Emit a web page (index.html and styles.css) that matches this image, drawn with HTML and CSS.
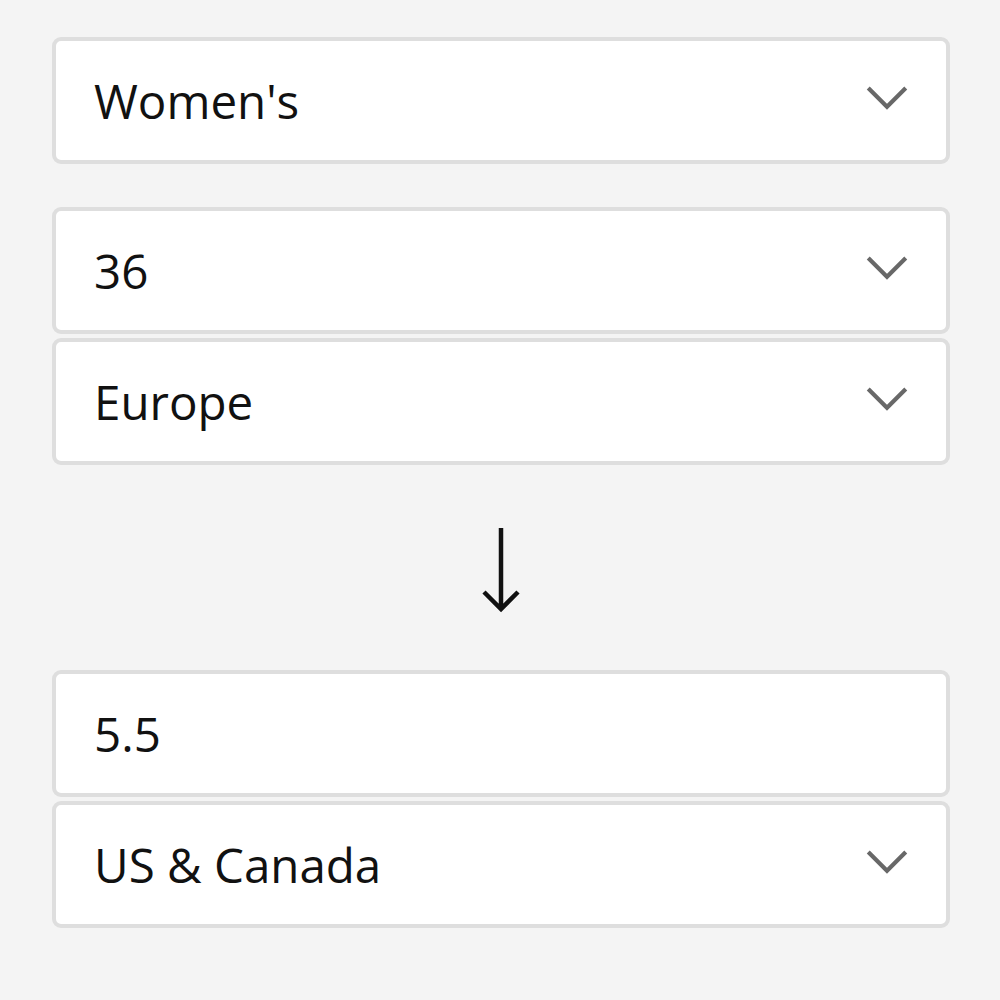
FILE: index.html
```html
<!DOCTYPE html>
<html lang="en">
<head>
<meta charset="utf-8">
<title>Shoe size converter</title>
<link rel="stylesheet" href="styles.css">
</head>
<body>
<main class="converter">
  <div class="field select">
    <span class="value">Women's</span>
    <svg class="chevron" viewBox="0 0 40 24" aria-hidden="true"><path d="M2 2 L20 20 L38 2"/></svg>
  </div>

  <div class="group">
    <div class="field select">
      <span class="value">36</span>
      <svg class="chevron" viewBox="0 0 40 24" aria-hidden="true"><path d="M2 2 L20 20 L38 2"/></svg>
    </div>
    <div class="field select">
      <span class="value">Europe</span>
      <svg class="chevron" viewBox="0 0 40 24" aria-hidden="true"><path d="M2 2 L20 20 L38 2"/></svg>
    </div>
  </div>

  <div class="arrow-row">
    <svg class="arrow" viewBox="0 0 40 86" aria-hidden="true"><path d="M20 0 V82 M3 64 L20 81 L37 64"/></svg>
  </div>

  <div class="group">
    <div class="field">
      <span class="value">5.5</span>
    </div>
    <div class="field select">
      <span class="value">US &amp; Canada</span>
      <svg class="chevron" viewBox="0 0 40 24" aria-hidden="true"><path d="M2 2 L20 20 L38 2"/></svg>
    </div>
  </div>
</main>
</body>
</html>
```

FILE: styles.css
```css
html, body {
  margin: 0;
  padding: 0;
  background: #f4f4f4;
}

body {
  font-family: "Open Sans", "Noto Sans", "Liberation Sans", sans-serif;
  color: #111;
}

.converter {
  width: 898px;
  margin-left: 52px;
  padding-top: 37px;
  display: flex;
  flex-direction: column;
}

.group {
  display: flex;
  flex-direction: column;
  gap: 4px;
  margin-top: 43px;
}

.arrow-row + .group {
  margin-top: 0;
}

.field {
  box-sizing: border-box;
  height: 127px;
  background: #fff;
  border: 4px solid #dedede;
  border-radius: 9px;
  display: flex;
  align-items: center;
  justify-content: space-between;
  padding: 0 38px 0 38px;
}

.value {
  font-size: 47.5px;
  line-height: 1;
}

.chevron {
  width: 42px;
  height: 25px;
  fill: none;
  stroke: #686868;
  stroke-width: 4;
  margin-top: -4px;
}

.arrow-row {
  height: 205px;
  display: flex;
  align-items: center;
  justify-content: center;
}

.arrow {
  width: 40px;
  height: 86px;
  fill: none;
  stroke: #111;
  stroke-width: 4.5;
  margin-top: 6px;
}
```
